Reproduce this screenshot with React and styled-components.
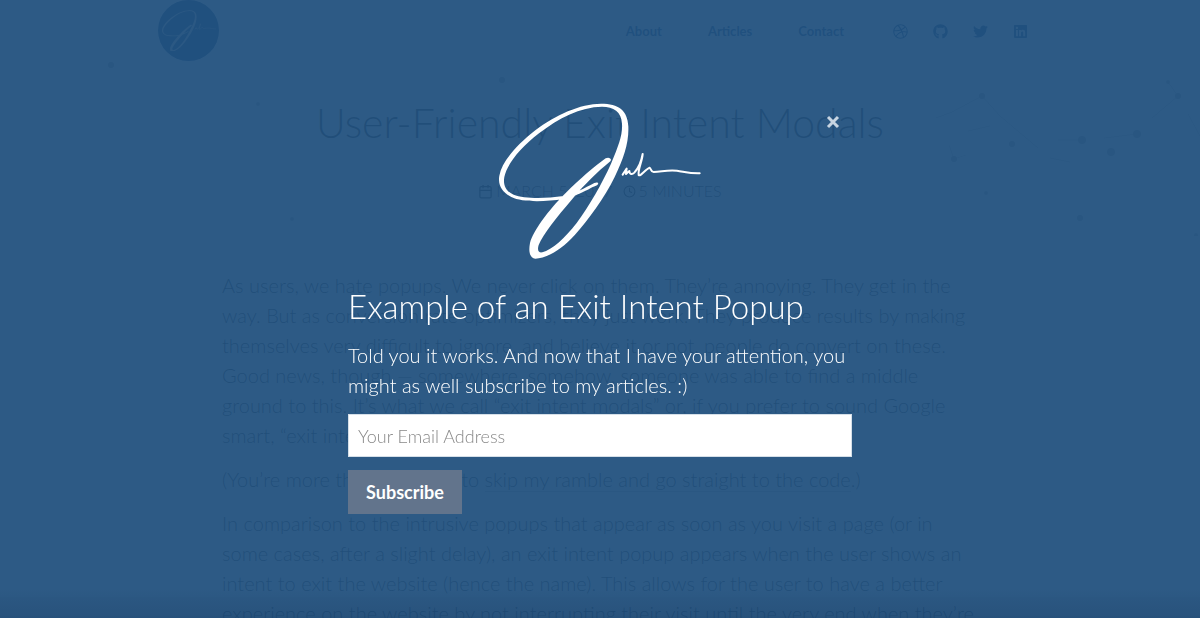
import React from "react";
import styled, { createGlobalStyle } from "styled-components";
import { FaDribbble, FaGithub, FaTwitter, FaLinkedin } from "react-icons/fa";
import { FiCalendar, FiClock } from "react-icons/fi";

const GlobalStyle = createGlobalStyle`
  * { box-sizing: border-box; }
  body {
    margin: 0;
    overflow: hidden;
    background: #fff;
    color: #222;
    font-family: Lato, "Liberation Sans", sans-serif;
    font-weight: 300;
    font-size: 20px;
    line-height: 30px;
  }
  h1, h2, p { margin: 0; font-weight: 300; }
`;

const Page = styled.div`
  height: 100vh;
  overflow: hidden;
`;

const Hero = styled.div`
  position: relative;
  height: 237px;
  border-bottom: 1px solid #eee;
`;

const Particles = styled.svg`
  position: absolute;
  inset: 0;
  width: 100%;
  height: 100%;
  fill: #aaa;
  stroke: #ccc;
`;

const Header = styled.header`
  display: flex;
  align-items: center;
  justify-content: space-between;
  max-width: 884px;
  height: 61px;
  margin: 0 auto;
  padding-right: 14px;
`;

const Badge = styled.a`
  display: grid;
  place-items: center;
  width: 61px;
  height: 61px;
  border-radius: 50%;
  background: #003a78;
  color: #ccc;
`;

const Nav = styled.nav`
  display: flex;
  align-items: center;
  gap: 25px;
  padding-top: 1px;
`;

const NavLinks = styled.div`
  display: flex;
  gap: 46px;
  margin-right: 24px;
`;

const NavLink = styled.a`
  display: flex;
  color: #003a78;
  font-size: 13px;
  font-weight: 700;
  line-height: 18px;
  text-decoration: none;
`;

const Title = styled.h1`
  margin-top: 36px;
  font-size: 41px;
  line-height: 52px;
  text-align: center;
`;

const Meta = styled.div`
  display: flex;
  justify-content: center;
  gap: 10px;
  margin-top: 27px;
  font-size: 16px;
  text-transform: uppercase;
`;

const MetaItem = styled.span`
  display: flex;
  align-items: center;
  gap: 3px;
  line-height: 30px;
`;

const Article = styled.article`
  display: flex;
  flex-direction: column;
  gap: 14px;
  max-width: 756px;
  margin: 0 auto;
  padding-top: 33px;
  white-space: nowrap;
`;

const TextLink = styled.a`
  color: #222;
  text-decoration: none;
  border-bottom: 1px solid #bbb;
`;

const Overlay = styled.div`
  position: fixed;
  inset: 0;
  display: flex;
  justify-content: center;
  align-items: flex-start;
  padding-top: 103px;
  background:
    linear-gradient(to bottom, rgba(0, 20, 50, 0) calc(100% - 30px), rgba(0, 20, 50, 0.12)),
    rgba(34, 81, 126, 0.95);
`;

const Dialog = styled.section`
  position: relative;
  width: 504px;
  max-width: 90%;
  color: #fff;
`;

const Close = styled.button`
  position: absolute;
  top: 9px;
  right: 9px;
  display: grid;
  place-items: center;
  width: 20px;
  height: 20px;
  padding: 0;
  border: 0;
  background: none;
  color: #c8d5e2;
`;

const LogoWrap = styled.div`
  display: flex;
  justify-content: center;
  height: 156px;
`;

const DialogTitle = styled.h2`
  margin-top: 25px;
  font-size: 33px;
  line-height: 44px;
`;

const DialogText = styled.p`
  margin: 12px 0 14px;
`;

const Form = styled.form`
  display: flex;
  flex-direction: column;
  align-items: flex-start;
  gap: 13px;
`;

const Email = styled.input`
  width: 100%;
  height: 43px;
  padding: 0 9px;
  border: 1px solid #d5dfe8;
  border-radius: 0;
  background: #fff;
  color: #333;
  font: 300 18px Lato, "Liberation Sans", sans-serif;
  &::placeholder { color: #888; opacity: 1; }
`;

const Submit = styled.button`
  width: 114px;
  height: 44px;
  padding: 0;
  border: 0;
  background: #62748c;
  color: #fff;
  font: 700 18px Lato, "Liberation Sans", sans-serif;
`;

function Signature({ width }) {
  return (
    <svg width={width} viewBox="57 40 604 468" fill="currentColor" aria-hidden="true">
      <path d="M250 328C190 337 125 338 93 322C65 307 52 285 57 258C65 215 110 165 165 122C225 76 300 42 362 42C415 42 442 62 444 110C446 160 430 205 403 262C372 325 325 390 284 435C242 482 195 507 165 507C148 505 144 485 149 460C159 423 203 363 256 310C298 268 343 230 376 206C386 200 396 208 390 215C350 248 315 282 276 328C228 384 188 434 175 466C170 482 175 490 186 488C215 481 254 445 289 400C326 350 366 280 392 222C416 165 427 135 425 102C423 66 400 51 365 51C300 52 235 85 176 131C122 173 80 222 72 262C67 289 80 307 100 315C130 327 190 328 250 319C285 312 312 295 342 280C352 275 358 281 350 287C332 294 320 303 297 312C280 319 270 324 250 328Z" />
      <path
        d="M427 255L439 237L437 253L447 244C448 254 455 256 462 249C472 238 483 216 487 193C486 215 472 240 475 256C480 262 494 240 508 234C513 238 511 247 520 247C545 246 560 240 590 243C615 247 630 252 658 251"
        fill="none"
        stroke="currentColor"
        strokeWidth="6"
        strokeLinecap="round"
        strokeLinejoin="round"
      />
    </svg>
  );
}

const CloseIcon = () => (
  <svg width="14" height="14" viewBox="0 0 14 14" aria-hidden="true">
    <path d="M2 2L12 12M12 2L2 12" stroke="currentColor" strokeWidth="3" />
  </svg>
);

const dots = [
  [111, 65, 3], [258, 104, 2], [292, 219, 2], [502, 80, 3], [982, 96, 3], [1012, 144, 3],
  [1082, 140, 4], [1111, 152, 4], [1137, 134, 4], [1168, 82, 2], [1178, 96, 3],
  [954, 159, 3], [986, 193, 2], [1080, 218, 3], [1196, 235, 2],
];

const article = [
  [
    "As users, we hate popups. We never click on them. They’re annoying. They get in the",
    "way. But as conversion rate optimizers, they just work. They produce results by making",
    "themselves very difficult to ignore, and believe it or not, people do convert on these.",
    "Good news, though — somewhere, somehow, someone was able to find a middle",
    "ground to this. It’s what we call “exit intent modals” or, if you prefer to sound Google",
    "smart, “exit intent technology”.",
  ],
  [
    "In comparison to the intrusive popups that appear as soon as you visit a page (or in",
    "some cases, after a slight delay), an exit intent popup appears when the user shows an",
    "intent to exit the website (hence the name). This allows for the user to have a better",
    "experience on the website by not interrupting their visit until the very end when they’re",
  ],
];

const Paragraph = ({ lines }) => (
  <p>
    {lines.map((line) => (
      <React.Fragment key={line}>
        {line}
        <br />
      </React.Fragment>
    ))}
  </p>
);

export default function App() {
  return (
    <>
      <GlobalStyle />
      <Page>
        <Hero>
          <Particles viewBox="0 0 1200 237" preserveAspectRatio="xMidYMin slice" aria-hidden="true">
            <path fill="none" d="M936 118L952 112L982 96L1000 116L1038 148M968 131L990 126M1050 158L1070 162M1058 140H1082M1104 138L1137 134M1152 118L1178 96L1168 82M1188 114L1200 136M949 145L954 159L966 155" />
            {dots.map(([x, y, r]) => (
              <circle key={`${x}-${y}`} cx={x} cy={y} r={r} stroke="none" />
            ))}
          </Particles>
          <Header>
            <Badge href="#home" aria-label="Home">
              <Signature width={54} />
            </Badge>
            <Nav>
              <NavLinks>
                <NavLink href="#about">About</NavLink>
                <NavLink href="#articles">Articles</NavLink>
                <NavLink href="#contact">Contact</NavLink>
              </NavLinks>
              <NavLink href="#dribbble" aria-label="Dribbble"><FaDribbble size={15} /></NavLink>
              <NavLink href="#github" aria-label="GitHub"><FaGithub size={15} /></NavLink>
              <NavLink href="#twitter" aria-label="Twitter"><FaTwitter size={15} /></NavLink>
              <NavLink href="#linkedin" aria-label="LinkedIn"><FaLinkedin size={15} /></NavLink>
            </Nav>
          </Header>
          <Title>User-Friendly Exit Intent Modals</Title>
          <Meta>
            <MetaItem><FiCalendar size={15} />March 5, 2017</MetaItem>
            <MetaItem><FiClock size={13} />5 minutes</MetaItem>
          </Meta>
        </Hero>
        <Article>
          <Paragraph lines={article[0]} />
          <p>
            (You’re more than welcome to <TextLink href="#code">skip my ramble and go straight to the code</TextLink>.)
          </p>
          <Paragraph lines={article[1]} />
        </Article>
      </Page>
      <Overlay>
        <Dialog role="dialog" aria-labelledby="popup-title">
          <LogoWrap><Signature width={202} /></LogoWrap>
          <Close type="button" aria-label="Close"><CloseIcon /></Close>
          <DialogTitle id="popup-title">Example of an Exit Intent Popup</DialogTitle>
          <DialogText>
            Told you it works. And now that I have your attention, you might as well subscribe to my articles. :)
          </DialogText>
          <Form>
            <Email type="email" placeholder="Your Email Address" aria-label="Your Email Address" />
            <Submit type="button">Subscribe</Submit>
          </Form>
        </Dialog>
      </Overlay>
    </>
  );
}
